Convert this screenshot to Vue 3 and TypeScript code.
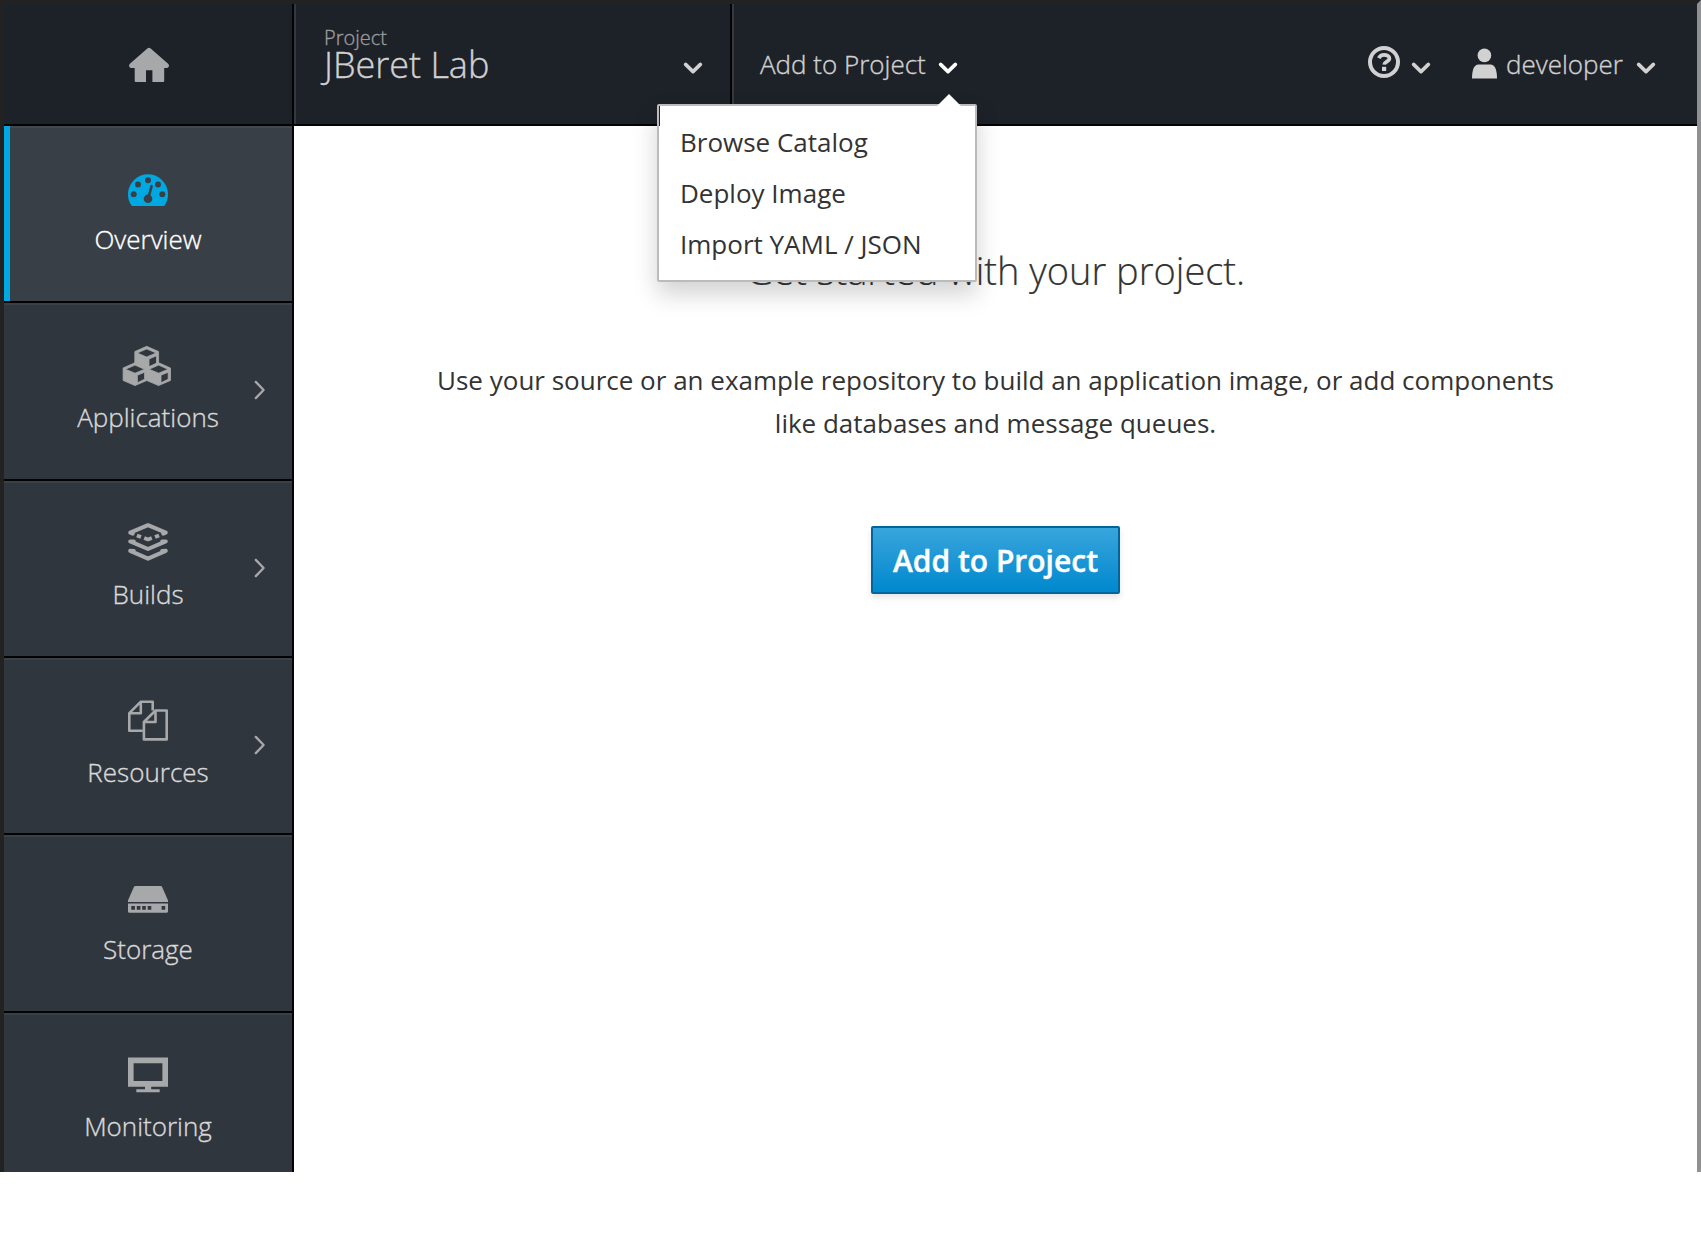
<script setup lang="ts">
interface NavItem {
  id: string
  label: string
  active?: boolean
  expandable?: boolean
}

const navItems: NavItem[] = [
  { id: 'overview', label: 'Overview', active: true },
  { id: 'applications', label: 'Applications', expandable: true },
  { id: 'builds', label: 'Builds', expandable: true },
  { id: 'resources', label: 'Resources', expandable: true },
  { id: 'storage', label: 'Storage' },
  { id: 'monitoring', label: 'Monitoring' },
]

const addOptions: string[] = ['Browse Catalog', 'Deploy Image', 'Import YAML / JSON']
</script>

<template>
  <div class="console">
    <header class="topbar">
      <a class="home">
        <svg width="42" height="36" viewBox="0 0 42 36">
          <path d="M19.6 1.2Q21 .1 22.4 1.2L40.4 17Q41.6 18.4 40.6 20Q40 21 38.6 21H36.2V34Q36.2 35 35.2 35H24.4V23.3H18V35H7.7Q6.7 35 6.7 34V21H3.4Q2 21 1.4 20Q.6 18.4 1.6 17Z" fill="#a7a8aa" />
        </svg>
      </a>
      <div class="project">
        <div class="project-text">
          <span class="project-label">Project</span>
          <span class="project-name">JBeret Lab</span>
        </div>
        <svg class="caret" width="20" height="14" viewBox="0 0 20 14"><path d="M2.6 3.4L10 10.6L17.4 3.4" /></svg>
      </div>
      <div class="add">
        <span class="add-text">Add to Project</span>
        <svg class="caret open" width="20" height="14" viewBox="0 0 20 14"><path d="M2.6 3.4L10 10.6L17.4 3.4" /></svg>
        <ul class="menu">
          <li v-for="option in addOptions" :key="option">{{ option }}</li>
        </ul>
      </div>
      <div class="tools">
        <svg class="help" width="32" height="32" viewBox="0 0 32 32" fill="none" stroke="#d1d1d1">
          <circle cx="16" cy="16" r="14" stroke-width="4" />
          <path d="M10.8 12.2C12 9.8 13.6 8.9 16 8.9C19 8.9 21.4 10.3 21.4 12.6C21.4 15.6 16.4 15.6 16.2 18.6" stroke-width="3.8" />
          <path d="M14 20.8H18.2V25H14Z" fill="#d1d1d1" stroke="none" />
        </svg>
        <svg class="caret" width="20" height="14" viewBox="0 0 20 14"><path d="M2.6 3.4L10 10.6L17.4 3.4" /></svg>
        <svg class="user" width="25" height="31" viewBox="0 0 25 31" fill="#d1d1d1">
          <circle cx="12.4" cy="7.4" r="6.8" />
          <path d="M0 30.6C0 21.5 2.4 16.6 6.4 16.6H18.6C22.6 16.6 25 21.5 25 30.6Z" />
        </svg>
        <span class="user-name">developer</span>
        <svg class="caret" width="20" height="14" viewBox="0 0 20 14"><path d="M2.6 3.4L10 10.6L17.4 3.4" /></svg>
      </div>
    </header>

    <div class="body">
      <nav class="sidebar">
        <a v-for="item in navItems" :key="item.id" class="nav-item" :class="[item.id, { active: item.active }]">
          <div class="nav-content">
            <svg class="nav-icon" width="50" height="50" viewBox="0 0 50 50">
              <g v-if="item.id === 'overview'">
                <path d="M8.8 42A20 20 0 1 1 41.2 42Z" fill="#00a8e1" />
                <g fill="#393f46">
                  <circle cx="10.7" cy="30.3" r="3" />
                  <circle cx="15" cy="20.4" r="3" />
                  <circle cx="25" cy="16.2" r="3" />
                  <circle cx="35" cy="20.4" r="3" />
                  <circle cx="39.3" cy="30.3" r="3" />
                  <circle cx="25" cy="34.7" r="4.3" />
                </g>
                <path d="M25.6 33L28.6 22.2" stroke="#393f46" stroke-width="2.6" stroke-linecap="round" />
              </g>
              <g v-else-if="item.id === 'applications'" fill="#a7a8aa" fill-rule="evenodd" stroke="#a7a8aa" stroke-width="0.8" stroke-linejoin="round">
                <path d="M23.7 5.3L35.6 10.6V23L23.7 28.5L11.8 23V10.6ZM23.7 7.9L14.2 12L23.7 16L33.2 12ZM26 18V25.8L33.5 22.2V14.8Z" />
                <path d="M12 21.7L23.9 27V39.4L12 44.6L.1 39.4V27ZM12 24.1L2.5 28.3L12 32.2L21.5 28.3ZM14.4 34.2V41.8L21.6 38.2V31.2Z" />
                <path d="M35.6 21.7L47.5 27V39.4L35.6 44.6L23.7 39.4V27ZM35.6 24.1L26.1 28.3L35.6 32.2L45.1 28.3ZM38 34.2V41.8L45.2 38.2V31.2Z" />
              </g>
              <g v-else-if="item.id === 'builds'" fill="none" stroke="#a7a8aa" stroke-width="4" stroke-linejoin="round">
                <path d="M9.8 14.6L7.2 13.6L25 6.2L42.8 13.6L40.2 14.6" stroke-linecap="round" />
                <path d="M10.8 22.6L7.2 22.4L25 30L42.8 22.4L39.2 22.6" stroke-linecap="round" />
                <path d="M10.8 32L7.2 31.8L25 39.7L42.8 31.8L39.2 32" stroke-linecap="round" />
                <path d="M13.9 16.5L18 18.1M21.2 18.9L25 20.4L28.8 18.9M32 18.1L36.1 16.5" stroke-width="3.8" />
              </g>
              <g v-else-if="item.id === 'resources'" fill="none" stroke="#a7a8aa" stroke-width="2.6" stroke-linejoin="round">
                <path d="M19.8 34.8H6.3V17.2L17.8 5.7H29.7V14.4M17.8 5.7V17.2H6.3" />
                <path d="M20.9 26L32.5 14.5H43.7V43.4H20.9ZM32.5 14.5V26H20.9" />
              </g>
              <g v-else-if="item.id === 'storage'" fill="#a7a8aa" fill-rule="evenodd">
                <path d="M12.6 13H37.6Q38.6 13 39 13.8L45 27.4V29H5V27.4L11 13.8Q11.5 13 12.6 13Z" />
                <path d="M5 30.6H45V38.6Q45 39.7 44 39.7H6Q5 39.7 5 38.6ZM8.3 33.1V36.7H11.9V33.1ZM13.8 33.1V36.7H17.4V33.1ZM19.2 33.1V36.7H22.8V33.1ZM24.7 33.1V36.7H28.3V33.1ZM38.6 33.1V36.7H42.2V33.1Z" />
              </g>
              <path v-else fill="#a7a8aa" fill-rule="evenodd" d="M5 6.4H45V35.8H28.2V38.2H36.7V41.2H13.3V38.2H22V35.8H5ZM10.6 12.3V29.9H39.4V12.3Z" />
            </svg>
            <span class="nav-label">{{ item.label }}</span>
          </div>
          <svg v-if="item.expandable" class="nav-arrow" width="12" height="20" viewBox="0 0 12 20">
            <path d="M1.8 1.9L9.6 10L1.8 18.1" fill="none" stroke="#a7a8aa" stroke-width="2.3" stroke-linecap="round" stroke-linejoin="round" />
          </svg>
        </a>
      </nav>

      <main class="main">
        <h2>Get started with your project.</h2>
        <p>Use your source or an example repository to build an application image, or add components<br />like databases and message queues.</p>
        <button type="button">Add to Project</button>
      </main>
    </div>
  </div>
</template>

<style>
body {
  background: #fff;
}
</style>

<style scoped>
* {
  box-sizing: border-box;
}
.console {
  display: flex;
  flex-direction: column;
  width: 1701px;
  height: 1172px;
  overflow: hidden;
  border: 4px solid #222;
  border-right-color: #919191;
  border-bottom: 0;
  font-family: "Open Sans", sans-serif;
  font-size: 26px;
  white-space: nowrap;
}
.topbar {
  display: flex;
  height: 122px;
  background: #1d2128;
  border-bottom: 2px solid #030303;
  color: #d1d1d1;
  font-weight: 300;
  -webkit-text-stroke: 0.35px currentColor;
}
.home {
  width: 290px;
  padding: 43px 0 0 124px;
  border-right: 2px solid #030303;
}
.home svg,
.caret,
.help,
.user,
.nav-icon,
.nav-arrow {
  display: block;
  flex: none;
}
.project {
  display: flex;
  width: 438px;
  padding-left: 28px;
  border-left: 2px solid #35393f;
  border-right: 2px solid #030303;
}
.project-text {
  display: flex;
  flex-direction: column;
  width: 359px;
  padding-top: 21px;
}
.project-label {
  color: #9c9c9c;
  font-size: 20px;
  line-height: 26px;
}
.project-name {
  font-size: 36px;
  line-height: 40px;
  margin-top: -6px;
}
.caret {
  margin-top: 57px;
}
.caret path {
  fill: none;
  stroke: #d1d1d1;
  stroke-width: 3.6;
  stroke-linecap: round;
  stroke-linejoin: round;
}
.caret.open path {
  stroke: #fff;
}
.add {
  position: relative;
  display: flex;
  padding-left: 26px;
  border-left: 2px solid #35393f;
}
.add-text {
  width: 178px;
  line-height: 36px;
  margin-top: 42px;
}
.menu {
  position: absolute;
  z-index: 2;
  top: 100px;
  left: -77px;
  width: 320px;
  height: 178px;
  margin: 0;
  padding: 11px 0 0 21px;
  list-style: none;
  background: #fff;
  border: 2px solid #bbb;
  border-radius: 2px;
  box-shadow: 0 12px 24px rgba(0, 0, 0, 0.18);
  color: #333;
  font-weight: 400;
  -webkit-text-stroke: 0;
}
.menu::before {
  content: "";
  position: absolute;
  top: -12px;
  left: 278px;
  width: 24px;
  height: 12px;
  background: #fff;
  clip-path: polygon(50% 0, 100% 100%, 0 100%);
}
.menu::after {
  content: "";
  position: absolute;
  top: 0;
  left: 0;
  width: 1px;
  height: 20px;
  background: #1d2128;
}
.menu li {
  height: 51px;
  line-height: 51px;
}
.tools {
  display: flex;
  margin-left: auto;
  padding-right: 41px;
}
.help {
  margin: 42px 11px 0 0;
}
.user {
  margin: 44px 9px 0 41px;
}
.user-name {
  width: 130px;
  line-height: 36px;
  margin-top: 42px;
}
.body {
  display: flex;
  flex: 1;
  min-height: 0;
}
.sidebar {
  display: grid;
  grid-template-rows: 177px 178px 177px 177px 178px 159px;
  width: 290px;
  background: #30363e;
  border-right: 2px solid #030303;
}
.nav-item {
  position: relative;
  display: grid;
  grid-template-columns: 50px 188px 50px;
  border-top: 2px solid #3a4047;
  border-bottom: 2px solid #030303;
  color: #d9d9d9;
  font-weight: 300;
  -webkit-text-stroke: 0.35px currentColor;
}
.nav-item:last-child {
  border-bottom: 0;
}
.nav-item.active {
  background: #393f46;
  border-top-color: #42484f;
  color: #fff;
}
.nav-item.active::before {
  content: "";
  position: absolute;
  top: -2px;
  bottom: 0;
  left: 0;
  width: 6px;
  background: #00a8e1;
}
.nav-content {
  grid-column: 2;
  display: flex;
  flex-direction: column;
  align-items: center;
  padding-top: 36px;
}
.nav-icon {
  overflow: visible;
}
.nav-label {
  margin-top: 8px;
  line-height: 36px;
}
.overview .nav-label,
.builds .nav-label,
.monitoring .nav-label {
  margin-top: 7px;
}
.nav-arrow {
  grid-column: 3;
  margin: 75px 0 0 12px;
}
.main {
  display: flex;
  flex: 1;
  flex-direction: column;
  align-items: center;
  color: #333;
}
h2 {
  margin: 120px 0 0;
  font-size: 38px;
  line-height: 48px;
  font-weight: 300;
  -webkit-text-stroke: 0.2px currentColor;
}
p {
  margin: 65px 0 0;
  line-height: 43px;
  text-align: center;
}
button {
  width: 249px;
  height: 68px;
  margin-top: 81px;
  padding: 2px 0 0;
  background: linear-gradient(#39a5dc, #0088ce);
  border: 2px solid #00659c;
  border-radius: 2px;
  box-shadow: 0 4px 6px rgba(3, 3, 3, 0.1);
  color: #fff;
  font: 600 30px/60px "Open Sans", sans-serif;
  -webkit-text-stroke: 0.4px currentColor;
}
</style>
